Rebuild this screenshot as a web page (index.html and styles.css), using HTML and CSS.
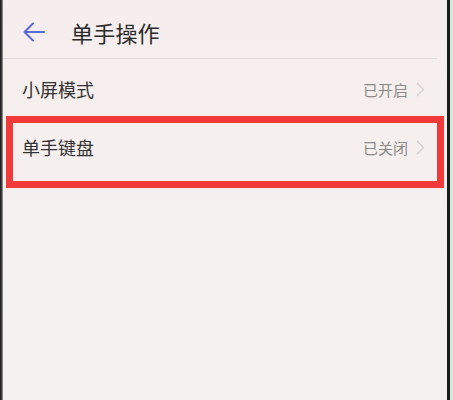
FILE: index.html
```html
<!DOCTYPE html>
<html lang="zh">
<head>
<meta charset="utf-8">
<link rel="stylesheet" href="styles.css">
</head>
<body>
<div class="frame">
  <div class="edge-left"></div>
  <div class="screen">
    <header class="topbar">
      <svg class="back" width="22" height="20" viewBox="0 0 22 20">
        <path d="M21 10H2M10 1.5L1.5 10L10 18.5" fill="none" stroke="#5a68d8" stroke-width="2" stroke-linecap="round" stroke-linejoin="round"/>
      </svg>
      <h1 class="title">单手操作</h1>
    </header>
    <div class="divider"></div>
    <ul class="list">
      <li class="row">
        <span class="label">小屏模式</span>
        <span class="value">已开启<svg class="chev" width="9" height="15" viewBox="0 0 9 15"><path d="M1 1l6.5 6.5L1 14" fill="none" stroke="#d4d0d0" stroke-width="1.3"/></svg></span>
      </li>
      <li class="row">
        <span class="label">单手键盘</span>
        <span class="value">已关闭<svg class="chev" width="9" height="15" viewBox="0 0 9 15"><path d="M1 1l6.5 6.5L1 14" fill="none" stroke="#d4d0d0" stroke-width="1.3"/></svg></span>
        <div class="highlight"></div>
      </li>
    </ul>
  </div>
  <div class="edge-right"></div>
  <div class="edge-green"></div>
</div>
</body>
</html>
```

FILE: styles.css
```css
* { box-sizing: border-box; }
html, body {
  margin: 0;
  padding: 0;
  height: 100%;
}
body {
  font-family: "Noto Sans CJK SC", "Noto Sans", sans-serif;
  background: #f3f1f0;
}
.frame {
  display: flex;
  height: 400px;
  width: 453px;
}
.edge-left {
  width: 3px;
  background: linear-gradient(to right, #111, #555 70%, #bbb);
}
.edge-right {
  width: 3px;
  background: #1c1c1c;
}
.edge-green {
  width: 3px;
  background: #d4ead6;
}
.screen {
  flex: 1;
  background: linear-gradient(to bottom, #f6eeee 0%, #f5efee 35%, #f4f1f0 60%, #f3f2f1 100%);
  display: flex;
  flex-direction: column;
}
.topbar {
  height: 58px;
  display: flex;
  align-items: center;
  padding-left: 20px;
  padding-top: 6px;
}
.back {
  flex: none;
}
.title {
  margin: 0 0 0 26px;
  font-size: 22px;
  font-weight: 400;
  color: #2b2b2b;
  letter-spacing: 0.2px;
}
.divider {
  height: 1px;
  background: #e2dcdc;
  margin-right: 10px;
}
.list {
  list-style: none;
  margin: 0;
  padding: 0;
}
.row {
  position: relative;
  height: 58px;
  display: flex;
  align-items: center;
  justify-content: space-between;
  padding: 2px 22px 0 19px;
}
.label {
  font-size: 18px;
  color: #333;
}
.value {
  display: flex;
  align-items: center;
  gap: 8px;
  font-size: 15px;
  color: #8a8888;
}
.highlight {
  position: absolute;
  left: 3px;
  top: -1px;
  width: 438px;
  height: 72px;
  border: 7px solid #f23a3a;
}
```
